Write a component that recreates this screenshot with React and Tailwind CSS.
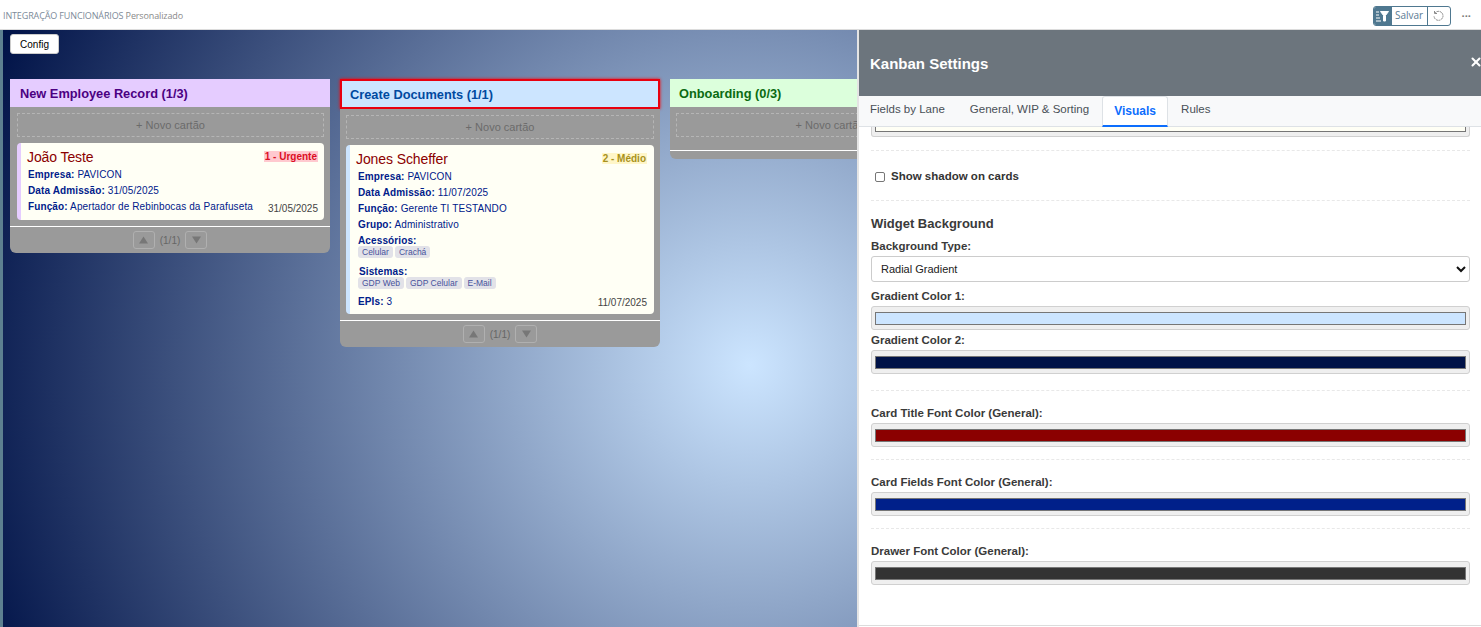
import React from 'react';
import { X } from 'lucide-react';

const Field = ({ label, value }) => (
  <div className="h-4 text-[10px] leading-4 tracking-[0.12px] text-[#00208a]">
    <b>{label}:</b> {value}
  </div>
);

const Tag = ({ children }) => (
  <span className="rounded-[3px] bg-[#e2e2e8] px-1 py-0 text-[8.5px] leading-3 text-[#47529c]">{children}</span>
);

const Pager = () => (
  <div className="flex h-[27px] items-center justify-center gap-[4px] border-t border-white text-[10px] text-[#666]">
    <span className="flex h-[18px] w-[22px] items-center justify-center rounded-[3px] border border-[#b0b0b0] text-[#777]">
      <svg width="9" height="8" viewBox="0 0 10 8"><path d="M5 0l5 8H0z" fill="currentColor" /></svg>
    </span>
    <span className="mx-[1px]">(1/1)</span>
    <span className="flex h-[18px] w-[22px] items-center justify-center rounded-[3px] border border-[#b0b0b0] text-[#777]">
      <svg width="9" height="8" viewBox="0 0 10 8"><path d="M0 0h10L5 8z" fill="currentColor" /></svg>
    </span>
  </div>
);

const NewCard = () => (
  <div className="flex h-6 items-center justify-center border border-dashed border-[#b5b5b5] text-[11px] text-[#6b6b6b]">
    + Novo cartão
  </div>
);

const Lane = ({ title, headerClass, bodyClass, children, pager = true }) => (
  <div className="w-[320px] shrink-0">
    <div className={`flex items-center pt-[1px] text-[12.8px] font-bold ${headerClass}`}>{title}</div>
    <div className="rounded-b-md bg-[#9a9a9a]">
      <div className={`pt-[6px] ${bodyClass}`}>
        <NewCard />
        {children}
      </div>
      {pager ? <Pager /> : <div className="h-[9px] border-t border-white" />}
    </div>
  </div>
);

const Card = ({ title, badge, badgeClass, cardClass, dateClass, date, children }) => (
  <div className={`relative mt-[6px] rounded-[4px] border-l-[4px] bg-[#fffff5] pt-[5px] pl-[6px] ${cardClass}`}>
    <div className="flex items-start justify-between">
      <div className="text-sm leading-[18px] tracking-[-0.1px] text-[#8b0000]">{title}</div>
      <div className={`mt-[3px] px-[1px] text-[10px] leading-[11px] font-bold ${badgeClass}`}>{badge}</div>
    </div>
    {children}
    <div className={`absolute bottom-[5px] text-[10px] leading-3 text-[#444] ${dateClass}`}>{date}</div>
  </div>
);

const ColorField = ({ label, colorClass, className = '' }) => (
  <div className={className}>
    <div className="text-[11.5px] leading-[18px] font-bold text-[#3a3a3a]">{label}</div>
    <div className="mt-[1px] h-6 rounded-[3px] border border-[#d0d0d0] bg-[#efefef] px-[3px] py-[5px]">
      <div className={`h-[13px] border border-[#767676] ${colorClass}`} />
    </div>
  </div>
);

const Divider = ({ className = '' }) => <div className={`border-t border-dashed border-[#e8e8e8] ${className}`} />;

export default function App() {
  return (
    <div className="flex h-[627px] w-[1481px] flex-col overflow-hidden bg-white font-['Liberation_Sans',sans-serif]">
      {/* Page bar */}
      <div className="flex h-[30px] shrink-0 items-center justify-between border-b border-[#dcdcdc] pt-[2px] pr-[10px] pl-[3px] font-['Open_Sans',sans-serif]">
        <div className="text-[9px] tracking-[-0.13px] text-[#7c8a99]">
          INTEGRAÇÃO FUNCIONÁRIOS <span className="text-[#8a8a8a]">Personalizado</span>
        </div>
        <div className="flex items-center">
          <div className="flex h-[20px] items-center overflow-hidden rounded-[3px] border border-[#4f7890]">
            <span className="flex h-full w-[18px] items-center justify-center bg-[#4f7890]">
              <svg width="13" height="12" viewBox="0 0 13 12" fill="none" stroke="white" strokeWidth="1">
                <path d="M0 2h3M0 5h3M0 8h4M0 11h5" />
                <path d="M4.500 1.500h8L9.500 5.500V11H7.500V5.500z" fill="white" />
              </svg>
            </span>
            <span className="flex h-full w-[36px] items-center justify-center border-r border-[#4f7890] text-[10px] text-[#5a7a92]">Salvar</span>
            <span className="flex h-full w-[22px] items-center justify-center">
              <svg width="12" height="12" viewBox="0 0 12 12" fill="none" stroke="#8a8a8a" strokeWidth="1">
                <path d="M2 3a4.500 4.500 0 1 1-1 3" strokeDasharray="2 0.600" />
                <path d="M1.500 1v2.500H4" />
              </svg>
            </span>
          </div>
          <div className="ml-[11px] text-[11px] leading-none font-bold text-[#777]">···</div>
        </div>
      </div>

      {/* Board */}
      <div className="relative min-h-0 flex-1 overflow-hidden border-l-[3px] border-[#5d8090] bg-[radial-gradient(circle_818px_at_747px_335px,#cce5ff,#001247)]">
        <div className="flex pt-[4px] pl-[7px]">
          <button className="h-[20px] w-[49px] rounded-[3px] border border-[#ccc] bg-white text-[10px] text-black">Config</button>
        </div>
        <div className="mt-[25px] flex items-start gap-[10px] pl-[7px]">
          <Lane
            title="New Employee Record (1/3)"
            headerClass="h-[28px] bg-[#e5ccff] px-[10px] text-[#4b0082]"
            bodyClass="pr-[6px] pb-[6px] pl-[7px]"
          >
            <Card
              title="João Teste"
              badge="1 - Urgente"
              badgeClass="bg-[#ffc9cf] text-[#dc0f24]"
              cardClass="border-[#e5ccff] pr-[6px] pb-[5px]"
              dateClass="right-[6px]"
              date="31/05/2025"
            >
              <div className="pt-[1px] pl-[1px]">
                <Field label="Empresa" value="PAVICON" />
                <Field label="Data Admissão" value="31/05/2025" />
                <Field label="Função" value="Apertador de Rebinbocas da Parafuseta" />
              </div>
            </Card>
          </Lane>

          <Lane
            title="Create Documents (1/1)"
            headerClass="h-[30px] border-2 border-[#e8000f] bg-[#cce5ff] px-[8px] text-[#004a9f] shadow-[0_0_3px_#ff0000]"
            bodyClass="px-[6px] pb-[6px]"
          >
            <Card
              title="Jones Scheffer"
              badge="2 - Médio"
              badgeClass="bg-[#fff6c8] text-[#a8921c]"
              cardClass="border-[#cce5ff] pr-[7px] pb-[4px]"
              dateClass="right-[7px]"
              date="11/07/2025"
            >
              <div className="pt-[1px] pl-[2px]">
                <Field label="Empresa" value="PAVICON" />
                <Field label="Data Admissão" value="11/07/2025" />
                <Field label="Função" value="Gerente TI TESTANDO" />
                <Field label="Grupo" value="Administrativo" />
                <div className="h-[11px] text-[10px] leading-4 font-bold tracking-[0.12px] text-[#00208a]">Acessórios:</div>
                <div className="flex h-[16px] items-center gap-[2px]">
                  <Tag>Celular</Tag>
                  <Tag>Crachá</Tag>
                </div>
                <div className="mt-[4px] h-[11px] pl-[1px] text-[10px] leading-4 font-bold tracking-[0.12px] text-[#00208a]">Sistemas:</div>
                <div className="flex h-[16px] items-center gap-[2px]">
                  <Tag>GDP Web</Tag>
                  <Tag>GDP Celular</Tag>
                  <Tag>E-Mail</Tag>
                </div>
                <div className="mt-[3px]">
                  <Field label="EPIs" value="3" />
                </div>
              </div>
            </Card>
          </Lane>

          <Lane
            title="Onboarding (0/3)"
            headerClass="h-[28px] bg-[#dcffdc] px-[9px] text-[#0b6b12]"
            bodyClass="px-[6px] pb-[13px]"
            pager={false}
          />
        </div>

        {/* Settings drawer */}
        <div className="absolute top-0 right-0 bottom-0 flex w-[624px] flex-col border-l-2 border-[#e4e4e4] bg-white text-[#333]">
          <div className="relative flex h-[66px] shrink-0 items-center bg-[#6c757d] pt-[2px] pl-[11px] text-[15px] font-bold text-white">
            Kanban Settings
            <X size={14} strokeWidth={3.500} className="absolute top-[25px] -right-[2px] text-white" />
          </div>
          <div className="flex h-[31px] shrink-0 items-end border-b border-[#dee2e6] bg-[#f8f9fa] pl-[1px] text-[11.5px] text-[#495057]">
            <div className="flex h-[30px] items-center pr-[10px] pb-[2px] pl-[10px]">Fields by Lane</div>
            <div className="flex h-[30px] items-center pr-[13px] pb-[2px] pl-[15px]">General, WIP &amp; Sorting</div>
            <div className="-mb-[1px] flex h-[31px] w-[66px] items-center justify-center rounded-t-[3px] border border-b-2 border-[#dee2e6] border-b-[#0d6efd] bg-white text-xs font-bold text-[#0d6efd]">Visuals</div>
            <div className="flex h-[30px] items-center pb-[2px] pl-[13px]">Rules</div>
          </div>
          <div className="min-h-0 flex-1 overflow-hidden pr-[11px] pl-[12px]">
            {/* scrolled remains of the field above */}
            <div className="h-[10px] rounded-b-[3px] border-x border-b border-[#d0d0d0] bg-[#efefef] px-[3px]">
              <div className="h-[5px] border-x border-b border-[#767676] bg-[#fffff5]" />
            </div>
            <Divider className="mt-[13px]" />
            <label className="flex h-[49px] items-center gap-[6px] pt-[2px] pl-[4px] text-[11.5px] font-bold">
              <input type="checkbox" className="h-[10px] w-[10px] appearance-none rounded-[2px] border border-[#767676] bg-white" />
              Show shadow on cards
            </label>
            <Divider />
            <div className="mt-[15px] text-[13px] leading-4 font-bold text-[#3a3a3a]">Widget Background</div>
            <div className="mt-[5px] text-[11.5px] leading-[18px] font-bold text-[#3a3a3a]">Background Type:</div>
            <div className="mt-[1px] flex h-[26px] items-center justify-between rounded-[3px] border border-[#ccc] bg-white pr-[3px] pl-[9px] text-[11px] text-[#222]">
              Radial Gradient
              <svg width="10" height="7" viewBox="0 0 10 7" fill="none" stroke="#111" strokeWidth="2"><path d="M1 1l4 4 4-4" /></svg>
            </div>
            <ColorField className="mt-[5px]" label="Gradient Color 1:" colorClass="bg-[#cce5ff]" />
            <ColorField className="mt-[1px]" label="Gradient Color 2:" colorClass="bg-[#001247]" />
            <Divider className="mt-[16px] mb-[13px]" />
            <ColorField label="Card Title Font Color (General):" colorClass="bg-[#8b0000]" />
            <Divider className="mt-[12px] mb-[13px]" />
            <ColorField label="Card Fields Font Color (General):" colorClass="bg-[#00208a]" />
            <Divider className="mt-[12px] mb-[13px]" />
            <ColorField label="Drawer Font Color (General):" colorClass="bg-[#333333]" />
          </div>
          <div className="h-[2px] shrink-0 border-t border-[#dcdcdc]" />
        </div>
      </div>
    </div>
  );
}
